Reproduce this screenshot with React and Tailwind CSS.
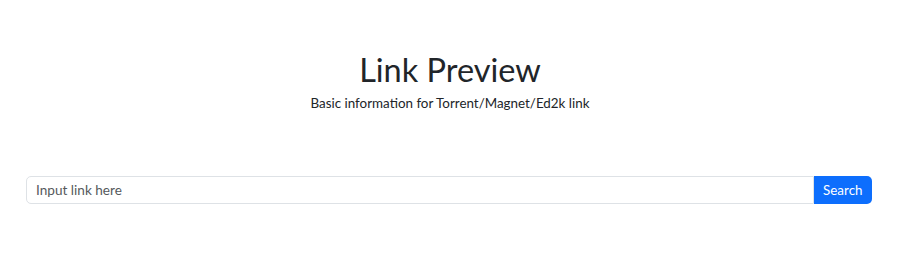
const App = () => {
  return (
    <div
      className="min-h-[263px] bg-white text-[#212529]"
      style={{ fontFamily: 'Lato, "Noto Sans", sans-serif' }}
    >
      <div className="pt-[50px] text-center">
        <h1 className="text-[32.5px] leading-[1.2] font-normal">Link Preview</h1>
        <p className="mt-[4px] text-[13.4px] leading-[1.5]">
          Basic information for Torrent/Magnet/Ed2k link
        </p>
      </div>

      <div className="mt-[63px] flex pl-[26px] pr-[28px]">
        <input
          type="text"
          placeholder="Input link here"
          className="h-[28px] flex-1 rounded-l-[5px] border border-[#dee2e6] px-[9px] text-[13.6px] text-[#212529] placeholder:text-[#55595c] outline-none"
        />
        <button className="h-[28px] rounded-r-[5px] bg-[#0d6efd] px-[9.5px] text-[13.4px] text-white">
          Search
        </button>
      </div>
    </div>
  );
};

export default App;
